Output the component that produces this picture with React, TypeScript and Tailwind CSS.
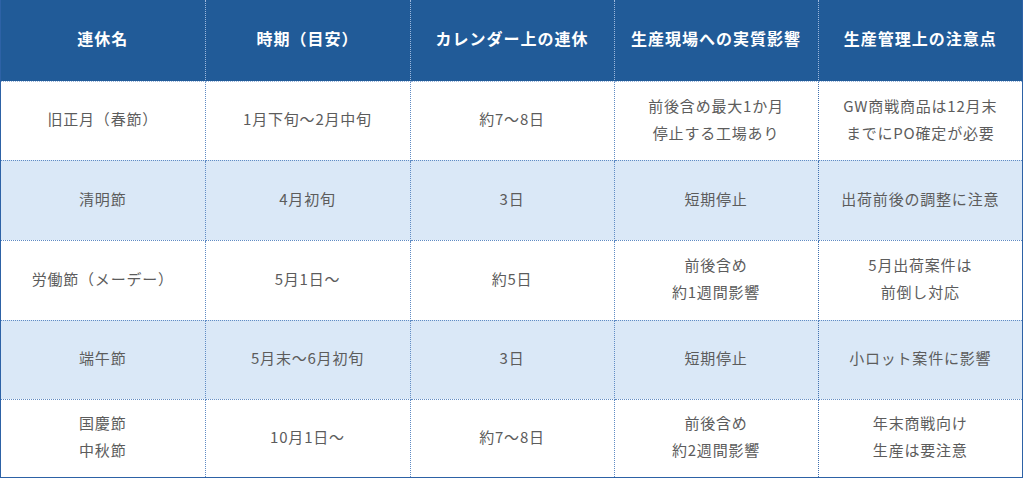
const HEADERS = ['連休名', '時期（目安）', 'カレンダー上の連休', '生産現場への実質影響', '生産管理上の注意点'];

const ROWS: { cells: string[][]; h: string; shaded: boolean }[] = [
  { cells: [['旧正月（春節）'], ['1月下旬～2月中旬'], ['約7～8日'], ['前後含め最大1か月', '停止する工場あり'], ['GW商戦商品は12月末', 'までにPO確定が必要']], h: 'h-[79px]', shaded: false },
  { cells: [['清明節'], ['4月初旬'], ['3日'], ['短期停止'], ['出荷前後の調整に注意']], h: 'h-[80px]', shaded: true },
  { cells: [['労働節（メーデー）'], ['5月1日～'], ['約5日'], ['前後含め', '約1週間影響'], ['5月出荷案件は', '前倒し対応']], h: 'h-[80px]', shaded: false },
  { cells: [['端午節'], ['5月末～6月初旬'], ['3日'], ['短期停止'], ['小ロット案件に影響']], h: 'h-[79px]', shaded: true },
  { cells: [['国慶節', '中秋節'], ['10月1日～'], ['約7～8日'], ['前後含め', '約2週間影響'], ['年末商戦向け', '生産は要注意']], h: 'h-[78px]', shaded: false },
];

export default function App() {
  return (
    <div className="w-[1024px] h-[479px] bg-white font-['Noto_Sans_CJK_JP','Noto_Sans',sans-serif]">
      <div className="w-[1023px] h-[478px] border-l border-r border-b border-[#2d62a6] overflow-hidden">
        <table className="w-full table-fixed border-collapse">
          <colgroup>
            <col className="w-[204px]" />
            <col className="w-[205px]" />
            <col className="w-[204px]" />
            <col className="w-[204px]" />
            <col />
          </colgroup>
          <thead>
            <tr className="h-[81px] bg-[#215b98]">
              {HEADERS.map((h, i) => (
                <th
                  key={h}
                  className={`pb-[4px] text-white font-bold text-[16px] tracking-[1px] text-center align-middle border-b border-dotted border-[#9db8dc] ${i < 4 ? 'border-r' : ''}`}
                >
                  {h}
                </th>
              ))}
            </tr>
          </thead>
          <tbody>
            {ROWS.map((row, ri) => (
              <tr key={ri} className={`${row.h} ${row.shaded ? 'bg-[#dae8f7]' : 'bg-white'}`}>
                {row.cells.map((lines, ci) => (
                  <td
                    key={ci}
                    className={`pb-[4px] text-center align-middle text-[15px] leading-[27px] tracking-[0.8px] text-[#5c5c5c] border-dotted border-[#5f8bc4] ${ri < 4 ? 'border-b' : ''} ${ci < 4 ? 'border-r' : ''} ${ci === 3 ? 'border-r-[#3f6fae]' : ''}`}
                  >
                    {lines.map((l) => (
                      <div key={l}>{l}</div>
                    ))}
                  </td>
                ))}
              </tr>
            ))}
          </tbody>
        </table>
      </div>
    </div>
  );
}
